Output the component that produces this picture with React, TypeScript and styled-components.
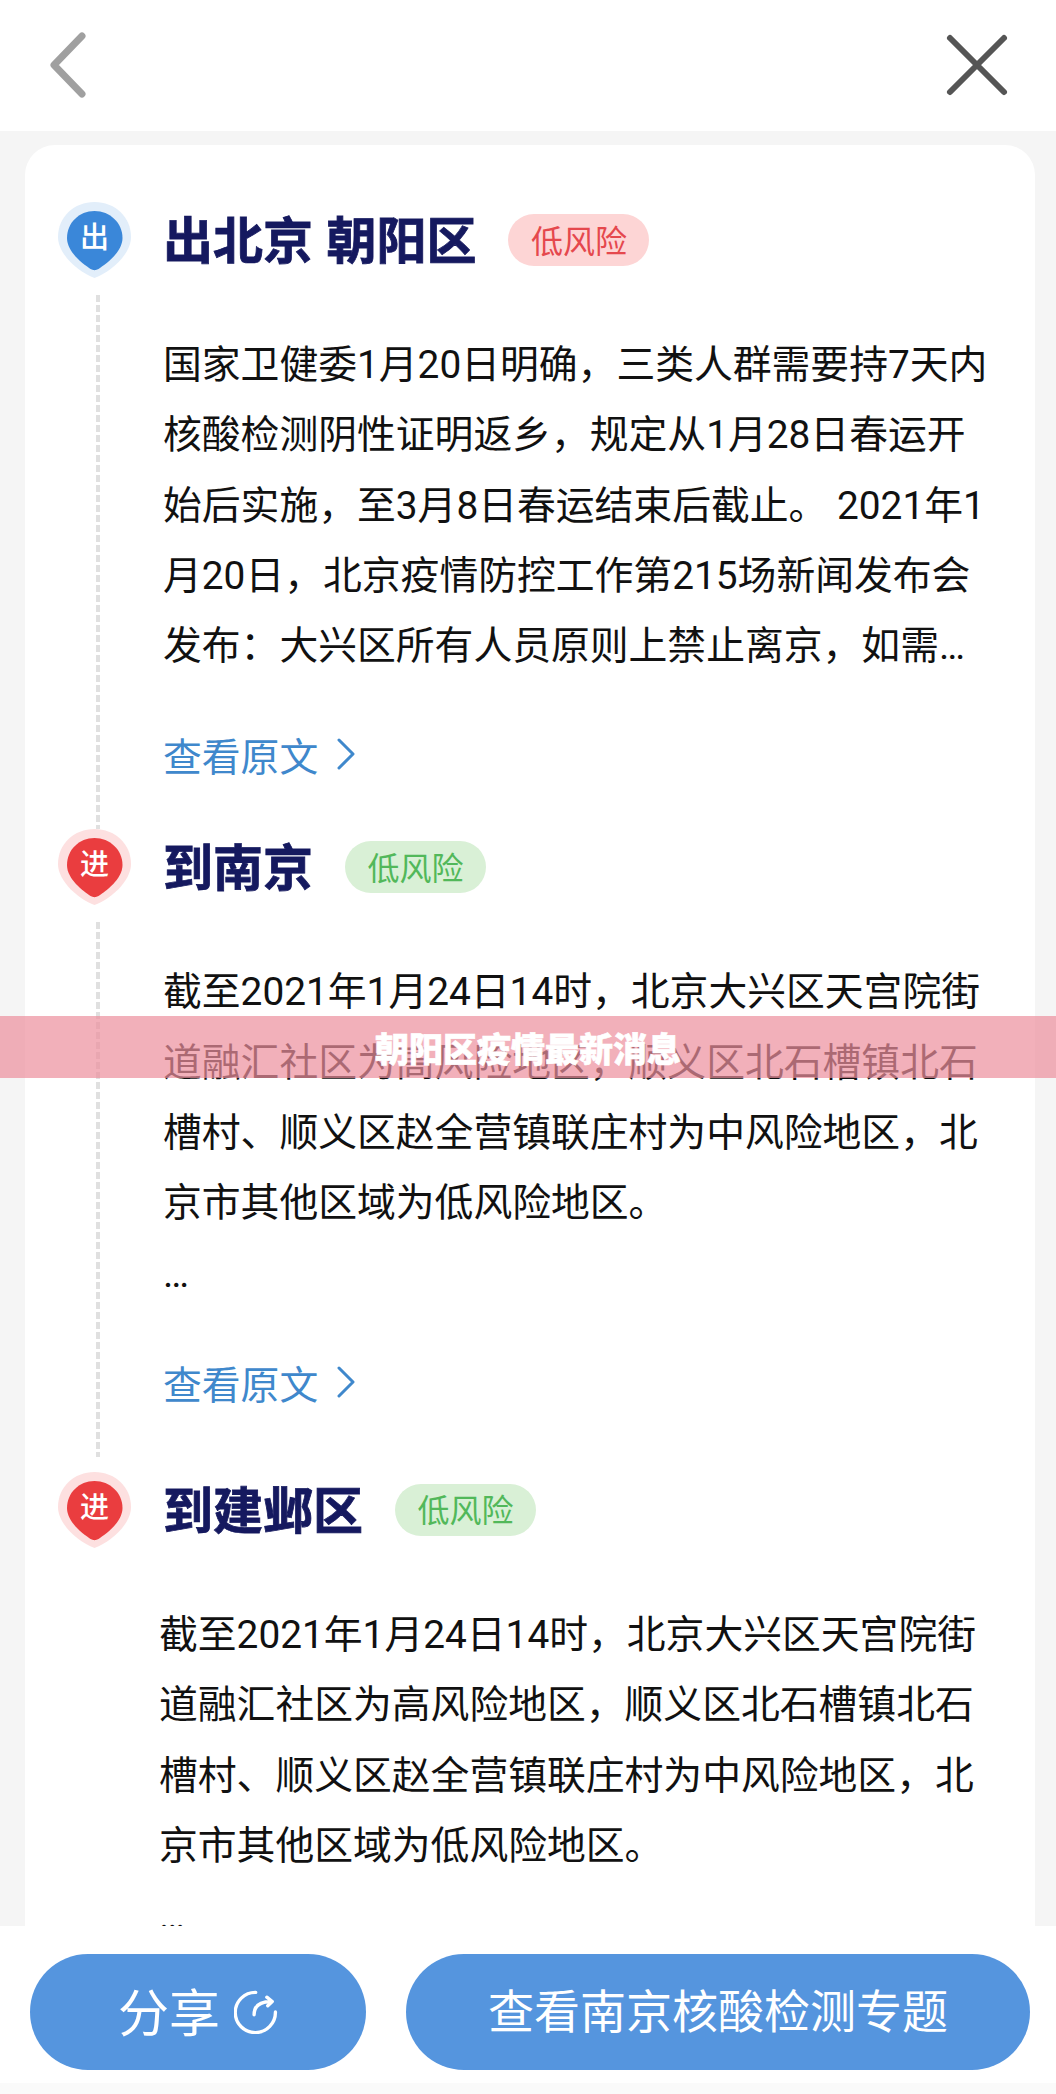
import React from 'react';
import styled, { createGlobalStyle } from 'styled-components';

const GlobalStyle = createGlobalStyle`
  html, body {
    margin: 0;
    padding: 0;
    background: #f5f5f5;
  }
  * {
    box-sizing: border-box;
  }
`;

type Tone = 'blue' | 'red';
type Risk = 'red' | 'green';

const sections = [
  {
    tag: '出',
    tone: 'blue' as Tone,
    title: '出北京 朝阳区',
    risk: 'red' as Risk,
    gap: 40,
    lines: [
      '国家卫健委1月20日明确，三类人群需要持7天内',
      '核酸检测阴性证明返乡，规定从1月28日春运开',
      '始后实施，至3月8日春运结束后截止。 2021年1',
      '月20日，北京疫情防控工作第215场新闻发布会',
      '发布：大兴区所有人员原则上禁止离京，如需…',
    ],
    link: true,
  },
  {
    tag: '进',
    tone: 'red' as Tone,
    title: '到南京',
    risk: 'green' as Risk,
    gap: 55,
    lines: [
      '截至2021年1月24日14时，北京大兴区天宫院街',
      '道融汇社区为高风险地区，顺义区北石槽镇北石',
      '槽村、顺义区赵全营镇联庄村为中风险地区，北',
      '京市其他区域为低风险地区。',
      '…',
    ],
    link: true,
  },
  {
    tag: '进',
    tone: 'red' as Tone,
    title: '到建邺区',
    risk: 'green' as Risk,
    gap: 0,
    lines: [
      '截至2021年1月24日14时，北京大兴区天宫院街',
      '道融汇社区为高风险地区，顺义区北石槽镇北石',
      '槽村、顺义区赵全营镇联庄村为中风险地区，北',
      '京市其他区域为低风险地区。',
      '…',
    ],
    link: false,
  },
];

const Pin = ({ tone, tag }: { tone: Tone; tag: string }) => (
  <PinWrap>
    <svg width="73" height="76" viewBox="0 0 73 76">
      <path
        d="M36.500 0C57 0 73 15 73 35C73 52 53 70 36.500 76C20 70 0 52 0 35C0 15 16 0 36.500 0Z"
        fill={tone === 'blue' ? '#e2eefa' : '#fde0e0'}
      />
      <path
        d="M36.500 9C52 9 64.500 21 64.500 36C64.500 50 48 62 40.500 67C38 68.500 35 68.500 32.500 67C25 62 9 50 9 36C9 21 21 9 36.500 9Z"
        fill={tone === 'blue' ? '#3a87d9' : '#ea3d3f'}
      />
    </svg>
    <PinLabel>{tag}</PinLabel>
  </PinWrap>
);

const App = () => (
  <Page>
    <GlobalStyle />
    <Header>
      <svg width="44" height="72" viewBox="0 0 44 72">
        <path d="M36 7L8 36L36 65" fill="none" stroke="#a0a0a0" strokeWidth="7" strokeLinecap="round" strokeLinejoin="round" />
      </svg>
      <svg width="66" height="66" viewBox="0 0 66 66">
        <path d="M6 6L60 60M60 6L6 60" fill="none" stroke="#555" strokeWidth="6" strokeLinecap="round" />
      </svg>
    </Header>
    <Main>
      <Card>
        {sections.map((section, i) => (
          <Section key={i} $gap={section.gap}>
            <Rail>
              <Pin tone={section.tone} tag={section.tag} />
              {section.link && <Dashes />}
            </Rail>
            <Content>
              <TitleRow>
                <Title>{section.title}</Title>
                <RiskPill $risk={section.risk}>低风险</RiskPill>
              </TitleRow>
              <Body $shift={i === 2}>
                {section.lines.map((line, j) => (
                  <div key={j}>{line}</div>
                ))}
              </Body>
              {section.link && (
                <SourceLink>
                  查看原文
                  <svg width="20" height="32" viewBox="0 0 20 32">
                    <path d="M3 2L17 16L3 30" fill="none" stroke="#3f88cc" strokeWidth="3" strokeLinecap="round" strokeLinejoin="round" />
                  </svg>
                </SourceLink>
              )}
            </Content>
          </Section>
        ))}
      </Card>
    </Main>
    <Footer>
      <ShareButton>
        分享
        <svg width="44" height="44" viewBox="0 0 46 46">
          <path d="M22.700 2.500A21 21 0 1 0 43.300 23" fill="none" stroke="#fff" strokeWidth="3.500" strokeLinecap="round" />
          <path d="M21 26C21 18 26 12 39 12M34.300 7.500L40 12L35.300 16.500" fill="none" stroke="#fff" strokeWidth="3.500" strokeLinecap="round" strokeLinejoin="round" />
        </svg>
      </ShareButton>
      <TopicButton>查看南京核酸检测专题</TopicButton>
    </Footer>
    <FootStrip />
    <Banner>朝阳区疫情最新消息</Banner>
  </Page>
);

const Page = styled.div`
  position: relative;
  width: 1056px;
  height: 2094px;
  display: flex;
  flex-direction: column;
  overflow: hidden;
  background: #f5f5f5;
  font-family: Roboto, 'Noto Sans CJK SC', sans-serif;
  color: #111;
`;

const Header = styled.header`
  flex: 0 0 131px;
  background: #fff;
  display: flex;
  align-items: center;
  justify-content: space-between;
  padding: 0 46px 2px 46px;
`;

const Main = styled.main`
  flex: 1;
  min-height: 0;
  overflow: hidden;
  padding: 14px 21px 0 25px;
`;

const Card = styled.div`
  background: #fff;
  border-radius: 30px 30px 0 0;
  padding: 57px 0 0 33px;
  height: 100%;
`;

const Section = styled.section<{ $gap: number }>`
  display: grid;
  grid-template-columns: 106px 1fr;
  margin-bottom: ${(p) => p.$gap}px;
`;

const Rail = styled.div`
  display: flex;
  flex-direction: column;
  align-items: flex-start;
`;

const PinWrap = styled.div`
  position: relative;
  width: 73px;
  height: 76px;
  flex: none;
`;

const PinLabel = styled.span`
  position: absolute;
  left: 0;
  right: 0;
  top: 18px;
  text-align: center;
  font-size: 29px;
  line-height: 36px;
  font-weight: 500;
  color: #fff;
`;

const Dashes = styled.div`
  flex: 1;
  width: 4px;
  margin: 17px 0 -40px 38px;
  background: repeating-linear-gradient(to bottom, #e0e0e0 0 7px, transparent 7px 10px);
`;

const Content = styled.div`
  min-width: 0;
  margin-left: -1px;
`;

const TitleRow = styled.div`
  display: flex;
  align-items: center;
  gap: 32px;
  height: 70px;
  margin-top: 3px;
`;

const Title = styled.h2`
  margin: 4px 0 0;
  font-size: 50px;
  line-height: 70px;
  font-weight: 700;
  color: #15195f;
  white-space: nowrap;
  word-spacing: 1px;
  -webkit-text-stroke: 0.8px #15195f;
`;

const RiskPill = styled.span<{ $risk: Risk }>`
  display: inline-flex;
  align-items: center;
  justify-content: center;
  width: 141px;
  height: 52px;
  border-radius: 26px;
  font-size: 32px;
  padding-bottom: 3px;
  background: ${(p) => (p.$risk === 'red' ? '#fdd5d5' : '#d9f0d6')};
  color: ${(p) => (p.$risk === 'red' ? '#e5484d' : '#52b85a')};
`;

const Body = styled.div<{ $shift: boolean }>`
  margin: 55px 0 0 ${(p) => (p.$shift ? '-4px' : '0')};
  font-size: 38.800px;
  line-height: 70.300px;
  white-space: nowrap;
`;

const SourceLink = styled.div`
  display: flex;
  align-items: center;
  gap: 18px;
  height: 70px;
  margin-top: 38px;
  font-size: 38.800px;
  color: #3f88cc;
`;

const Footer = styled.footer`
  flex: 0 0 157px;
  background: #fff;
  display: flex;
  align-items: flex-start;
  gap: 40px;
  padding: 28px 26px 0 30px;
`;

const PillButton = styled.div`
  height: 116px;
  border-radius: 58px;
  background: #5595de;
  color: #fff;
  display: flex;
  align-items: center;
  justify-content: center;
`;

const ShareButton = styled(PillButton)`
  flex: 0 0 336px;
  gap: 14px;
  font-size: 51px;
  line-height: 60px;
  padding-top: 5px;

  svg {
    margin-bottom: 5px;
  }
`;

const TopicButton = styled(PillButton)`
  flex: 1;
  font-size: 46px;
  padding-bottom: 9px;
`;

const FootStrip = styled.div`
  flex: 0 0 11px;
  background: #fafafa;
`;

const Banner = styled.div`
  position: absolute;
  left: 0;
  right: 0;
  top: 1016px;
  height: 62px;
  padding-top: 3px;
  background: rgba(236, 143, 157, 0.7);
  color: #fff;
  font-size: 34px;
  font-weight: 900;
  line-height: 62px;
  text-align: center;
  -webkit-text-stroke: 0.6px #fff;
`;

export default App;
